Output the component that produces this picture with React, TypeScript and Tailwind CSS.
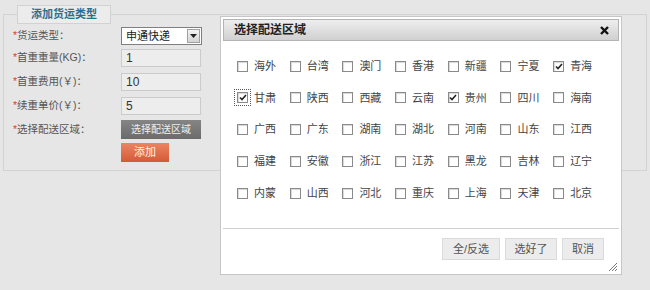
import React from 'react';

const regions = [
  ['海外', false], ['台湾', false], ['澳门', false], ['香港', false], ['新疆', false], ['宁夏', false], ['青海', true],
  ['甘肃', true], ['陕西', false], ['西藏', false], ['云南', false], ['贵州', true], ['四川', false], ['海南', false],
  ['广西', false], ['广东', false], ['湖南', false], ['湖北', false], ['河南', false], ['山东', false], ['江西', false],
  ['福建', false], ['安徽', false], ['浙江', false], ['江苏', false], ['黑龙', false], ['吉林', false], ['辽宁', false],
  ['内蒙', false], ['山西', false], ['河北', false], ['重庆', false], ['上海', false], ['天津', false], ['北京', false],
] as const;

function Box({ checked, focus }: { checked: boolean; focus?: boolean }) {
  const box = (
    <span className="flex h-[11px] w-[11px] items-center justify-center border border-[#8a8a8a] bg-white shadow-[inset_1px_1px_1px_#d8d8d8]">
      {checked && (
        <svg width="8" height="7" viewBox="0 0 8 7">
          <path d="M1 3.5 L3 5.5 L7 1" fill="none" stroke="#222" strokeWidth="1.6" />
        </svg>
      )}
    </span>
  );
  if (!focus) return box;
  return <span className="-m-[3px] border border-dotted border-[#555] p-[2px]">{box}</span>;
}

function Label({ text }: { text: string }) {
  return (
    <div className="w-[108px] text-[10.5px] text-[#555]">
      <span className="text-[#e0402a]">*</span>
      {text}
    </div>
  );
}

function Field({ value }: { value: string }) {
  return (
    <div className="flex h-[18px] w-[80px] items-center border border-[#cbcbcb] bg-[#ededed] pl-[4px] text-[12px] text-[#333]">
      {value}
    </div>
  );
}

export default function App() {
  return (
    <div
      className="relative h-[290px] w-[650px] overflow-hidden bg-[#e6e6e6] px-[3px] pt-[5px]"
      style={{ fontFamily: '"Liberation Sans", "Noto Sans CJK SC", sans-serif' }}
    >
      <div className="relative z-10 ml-[14px] flex h-[19px] w-[94px] items-center justify-center border border-[#d2d2d2] bg-[#ececec] text-[11px] font-bold text-[#2a6f93]">
        添加货运类型
      </div>
      <div className="-mt-[10px] h-[157px] border border-[#d3d3d3] pl-[9px] pt-[12px]">
        <div className="flex items-center">
          <Label text="货运类型：" />
          <div className="flex h-[18px] w-[81px] items-center justify-between border border-[#7f7f7f] bg-white pl-[4px] text-[11px] text-[#222]">
            申通快递
            <span className="mr-[1px] flex h-[14px] w-[13px] items-center justify-center border border-[#a0a0a0] bg-gradient-to-b from-[#f4f4f4] to-[#d4d4d4]">
              <svg width="7" height="4" viewBox="0 0 7 4">
                <path d="M0 0 H7 L3.5 4 Z" fill="#222" />
              </svg>
            </span>
          </div>
        </div>
        <div className="mt-[4px] flex items-center">
          <Label text="首重重量(KG)：" />
          <Field value="1" />
        </div>
        <div className="mt-[6px] flex items-center">
          <Label text="首重费用(￥)：" />
          <Field value="10" />
        </div>
        <div className="mt-[6px] flex items-center">
          <Label text="续重单价(￥)：" />
          <Field value="5" />
        </div>
        <div className="mt-[5px] flex items-center">
          <Label text="选择配送区域：" />
          <div className="flex h-[19px] w-[80px] items-center justify-center bg-gradient-to-b from-[#858585] to-[#6b6b6b] text-[10px] text-[#eeeeee]">
            选择配送区域
          </div>
        </div>
        <div className="mt-[4px] flex">
          <div className="w-[108px]" />
          <div className="flex h-[19px] w-[48px] items-center justify-center bg-gradient-to-b from-[#ec8461] to-[#d45a37] text-[11px] text-[#fff3ee]">
            添加
          </div>
        </div>
      </div>

      <div className="absolute left-[220px] top-[16px] flex h-[259px] w-[402px] flex-col border border-[#c6c6c6] bg-white p-[2px]">
        <div className="flex h-[24px] items-center justify-between border border-[#b3b3b3] bg-gradient-to-b from-[#eeeeee] to-[#d0d0d0] pl-[10px] pr-[9px]">
          <span className="text-[12px] font-bold text-[#222]">选择配送区域</span>
          <svg width="9" height="9" viewBox="0 0 9 9">
            <path d="M1 1 L8 8 M8 1 L1 8" stroke="#111" strokeWidth="2.4" />
          </svg>
        </div>
        <div className="grid grid-cols-[repeat(7,52.7px)] auto-rows-[31.75px] pl-[14px] pt-[9px]">
          {regions.map(([name, checked]) => (
            <div key={name} className="flex items-center gap-[6px] text-[11px] text-[#444]">
              <Box checked={checked} focus={name === '甘肃'} />
              <span>{name}</span>
            </div>
          ))}
        </div>
        <div className="mt-[19px] flex-1 border-t border-[#d0d0d0]">
          <div className="mr-[15px] mt-[9px] flex justify-end gap-[5px] text-[11px] text-[#555]">
            <div className="flex h-[22px] w-[58px] items-center justify-center border border-[#dadada] bg-[#ececec]">全/反选</div>
            <div className="flex h-[22px] w-[52px] items-center justify-center border border-[#dadada] bg-[#ececec]">选好了</div>
            <div className="flex h-[22px] w-[42px] items-center justify-center border border-[#dadada] bg-[#ececec]">取消</div>
          </div>
          <div className="mr-[1px] mt-[2px] flex justify-end">
            <svg width="10" height="10" viewBox="0 0 10 10">
              <path d="M9 1 L1 9 M9 4 L4 9 M9 7 L7 9" stroke="#777" strokeWidth="1" />
            </svg>
          </div>
        </div>
      </div>
    </div>
  );
}
